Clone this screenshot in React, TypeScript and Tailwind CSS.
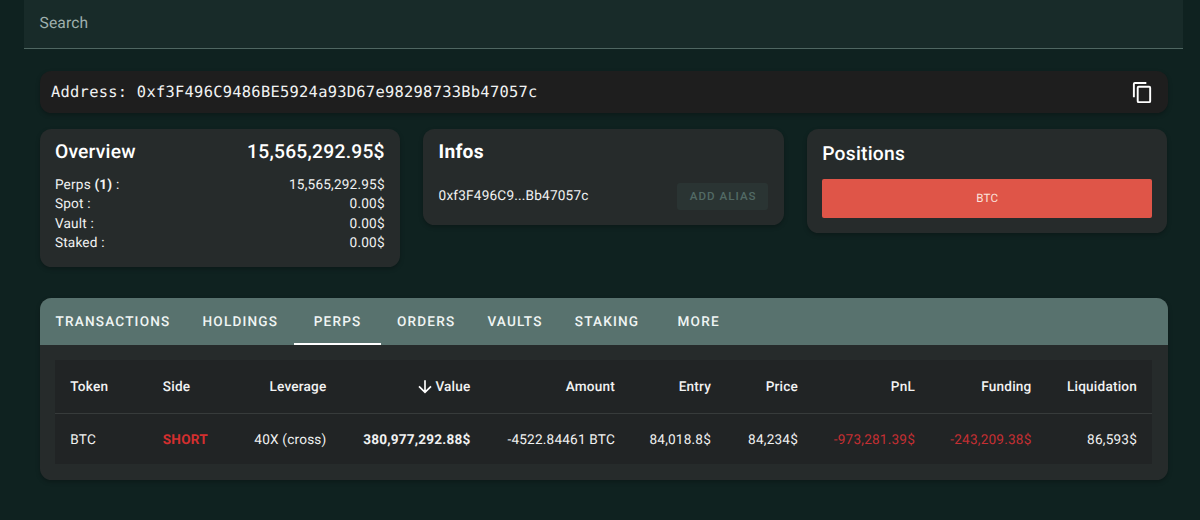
import React from "react";

const balances = [
  { id: "perps", label: <>Perps <b className="font-bold">(1)</b> :</>, value: "15,565,292.95$" },
  { id: "spot", label: "Spot :", value: "0.00$" },
  { id: "vault", label: "Vault :", value: "0.00$" },
  { id: "staked", label: "Staked :", value: "0.00$" },
];

const tabs = ["Transactions", "Holdings", "Perps", "Orders", "Vaults", "Staking", "More"];

const columns = [
  { title: "Token", value: "BTC", cell: "", left: true },
  { title: "Side", value: "SHORT", cell: "font-bold text-[#d32f2f]", left: true },
  { title: "Leverage", value: "40X (cross)", cell: "" },
  { title: "Value", value: "380,977,292.88$", cell: "font-bold", sorted: true },
  { title: "Amount", value: "-4522.84461 BTC", cell: "" },
  { title: "Entry", value: "84,018.8$", cell: "" },
  { title: "Price", value: "84,234$", cell: "" },
  { title: "PnL", value: "-973,281.39$", cell: "text-[#c62f33]" },
  { title: "Funding", value: "-243,209.38$", cell: "text-[#c62f33]" },
  { title: "Liquidation", value: "86,593$", cell: "" },
];

const card = "rounded-[11.5px] bg-[#262b2b] shadow-[0_2px_4px_rgba(0,0,0,0.25)]";
const gridCols =
  "grid grid-cols-[92.5px_78px_116.5px_144px_144.5px_96px_87px_117px_116.5px_105.5px]";

function CopyIcon() {
  return (
    <svg viewBox="0 0 24 24" className="size-[23px] fill-white">
      <path d="M19,21H8V7H19M19,5H8A2,2 0 0,0 6,7V21A2,2 0 0,0 8,23H19A2,2 0 0,0 21,21V7A2,2 0 0,0 19,5M16,1H4A2,2 0 0,0 2,3V17H4V3H16V1Z" />
    </svg>
  );
}

function ArrowDownIcon() {
  return (
    <svg viewBox="0 0 24 24" className="-mr-px size-5 -translate-x-px fill-white">
      <path d="M11,4H13V16L18.5,10.5L19.92,11.92L12,19.84L4.08,11.92L5.5,10.5L11,16V4Z" />
    </svg>
  );
}

export default function App() {
  return (
    <div className="h-[520px] w-[1200px] overflow-hidden bg-[#0f2220] font-[Roboto,sans-serif] text-[13.6px] tracking-[0.2px] text-[#f1f2f2] [text-rendering:geometricPrecision]">
      <div className="ml-6 mr-[17px] h-[49px] border-b border-[#4f6661] bg-[#182b29] pl-[15.5px] pt-[12px] text-[15.6px] leading-[22px] tracking-[0.15px] text-[#9fb0ad]">
        Search
      </div>

      <div className="pl-[39.5px] pr-[32.5px] pt-[22px]">
        <div className="flex h-[42px] items-center justify-between rounded-[11.5px] bg-[#1e1e1e] pl-[11.5px] pr-[14px] shadow-[0_2px_4px_rgba(0,0,0,0.25)]">
          <span className="pt-[2px] font-['DejaVu_Sans_Mono',monospace] text-[15.4px] tracking-[0.275px]">
            Address: 0xf3F496C9486BE5924a93D67e98298733Bb47057c
          </span>
          <CopyIcon />
        </div>

        <div className="mt-[16px] grid grid-cols-3 items-start gap-x-[23px]">
          <section className={`${card} h-[138px] px-[15.4px] pt-[10px]`}>
            <div className="flex justify-between text-[19.25px] font-medium leading-[26px] tracking-[0.24px] text-white">
              <h2>Overview</h2>
              <span>15,565,292.95$</span>
            </div>
            <div className="mt-[11px]">
              {balances.map((b) => (
                <div key={b.id} className="flex justify-between leading-[19.25px]">
                  <span>{b.label}</span>
                  <span>{b.value}</span>
                </div>
              ))}
            </div>
          </section>

          <section className={`${card} h-[95.5px] px-[15.4px] pt-[10px]`}>
            <h2 className="text-[19.25px] font-bold leading-[26px] tracking-[0.24px] text-white">Infos</h2>
            <div className="mt-[17.5px] flex items-center justify-between">
              <span className="pt-px">0xf3F496C9...Bb47057c</span>
              <button className="h-[27px] w-[91.5px] rounded-[3px] bg-[#2a3433] pl-px pt-px text-[11.6px] font-medium tracking-[1.02px] text-[#526a65]">
                ADD ALIAS
              </button>
            </div>
          </section>

          <section className={`${card} h-[104px] px-[15.4px] pt-[12px]`}>
            <h2 className="text-[19.25px] font-medium leading-[26px] tracking-[0.24px] text-white">Positions</h2>
            <div className="mt-[12px] flex h-[38.5px] items-center justify-center rounded-[2px] bg-[#df5548] text-[11.6px] text-[#fbe3dc]">
              BTC
            </div>
          </section>
        </div>

        <section className={`${card} mt-[31px] h-[181.5px] overflow-hidden`}>
          <nav className="flex h-[47px] bg-[#58726e]">
            {tabs.map((tab) => (
              <div
                key={tab}
                className={`flex min-w-[86.7px] items-center justify-center border-b-2 px-[16.05px] pt-1 text-[13.6px] font-medium uppercase tracking-[1.18px] text-[#f0f5f4] ${
                  tab === "Perps" ? "border-white" : "border-transparent"
                }`}
              >
                {tab}
              </div>
            ))}
          </nav>
          <div className="mx-[15.4px] mt-[15px] h-[104px] bg-[#212425]">
            <div className={`${gridCols} h-[54px] border-b border-[#373b3b]`}>
              {columns.map((c) => (
                <div
                  key={c.title}
                  className={`flex items-center px-[15.4px] pt-px font-medium ${c.left ? "" : "justify-end"}`}
                >
                  {c.sorted && <ArrowDownIcon />}
                  {c.title}
                </div>
              ))}
            </div>
            <div className={`${gridCols} h-[50px]`}>
              {columns.map((c) => (
                <div
                  key={c.title}
                  className={`flex items-center whitespace-nowrap px-[15.4px] pt-[2px] ${c.left ? "" : "justify-end"} ${c.cell}`}
                >
                  {c.value}
                </div>
              ))}
            </div>
          </div>
        </section>
      </div>
    </div>
  );
}
